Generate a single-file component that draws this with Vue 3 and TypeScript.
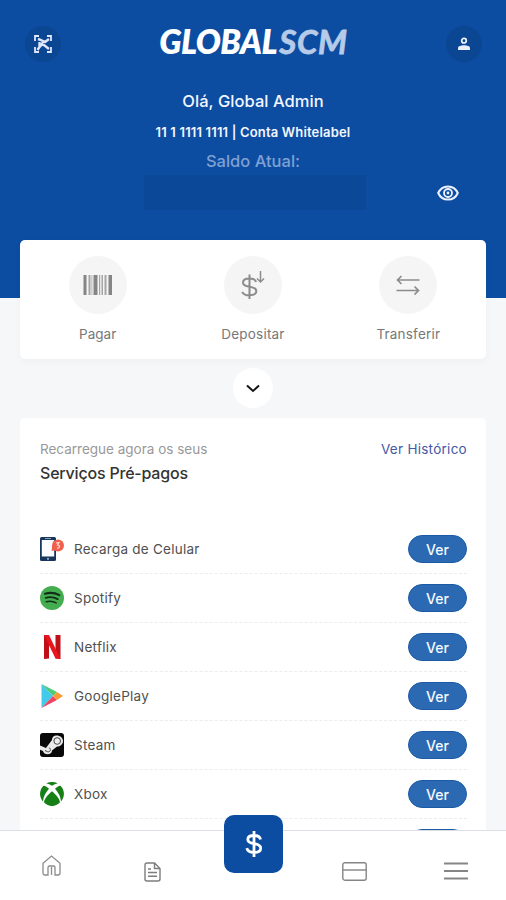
<script setup lang="ts">
interface Service {
  id: string
  name: string
}

const services: Service[] = [
  { id: 'phone', name: 'Recarga de Celular' },
  { id: 'spotify', name: 'Spotify' },
  { id: 'netflix', name: 'Netflix' },
  { id: 'play', name: 'GooglePlay' },
  { id: 'steam', name: 'Steam' },
  { id: 'xbox', name: 'Xbox' },
  { id: 'more', name: '' },
]
</script>

<template>
  <div class="app">
    <main class="content">
      <header class="hero">
        <div class="topbar">
          <button class="round" aria-label="QR">
            <svg width="20" height="20" viewBox="0 0 20 20" fill="none" stroke="#dfe6fa" stroke-width="1.800">
              <path d="M2 7V2h4M14 2h4v5M18 13v5h-4M6 18H2v-5" />
              <path d="M5 5l3 1 4 2 4-3M6.500 8v5l-2 3M8 10l3 1 5 4M10 8l-3 5" stroke-width="2.400" />
            </svg>
          </button>
          <div class="logo"><b>GLOBAL</b><span>SCM</span></div>
          <button class="round" aria-label="Perfil">
            <svg width="14" height="14" viewBox="0 0 14 14">
              <circle cx="7" cy="3.700" r="2.300" fill="none" stroke="#f0f3ff" stroke-width="1.700" />
              <path d="M1 13v-1.800C1 9.200 4 8.300 7 8.300s6 .9 6 2.900V13z" fill="#e8edff" />
            </svg>
          </button>
        </div>
        <div class="hello">Olá, Global Admin</div>
        <div class="account">11 1 1111 1111 | Conta Whitelabel</div>
        <div class="label">Saldo Atual:</div>
        <div class="balance">
          <span class="mask"></span>
          <svg class="eye" width="22" height="16" viewBox="0 0 22 16" fill="none" stroke="#eef2ff">
            <path d="M1.200 8C3 4 6.500 1.400 11 1.400S19 4 20.800 8C19 12 15.500 14.600 11 14.600S3 12 1.200 8z" stroke-width="2" />
            <circle cx="11" cy="8" r="4" stroke-width="1.800" />
            <circle cx="11" cy="8" r="1.400" fill="#eef2ff" stroke="none" />
          </svg>
        </div>
      </header>

      <section class="actions">
        <div class="action">
          <span class="disc">
            <svg width="30" height="20" viewBox="0 0 30 20" fill="#858585">
              <path d="M.5 0h3v20h-3zM10.500 0h4v20h-4zM25.500 0h3.500v20h-3.500z" />
              <path d="M5.500 0h2v20h-2zM8.500 0h.8v20h-.8zM16 0h1.200v20H16zM18.500 0h1.500v20h-1.500zM21.500 0h2v20h-2z" fill="#a5a5a5" />
            </svg>
          </span>
          <span>Pagar</span>
        </div>
        <div class="action wide">
          <span class="disc">
            <svg width="26" height="30" viewBox="0 0 26 30" fill="none" stroke="#8c8c8c" stroke-width="2">
              <path d="M9.500 4.500V29M16 12C15.500 9.200 13 8.500 9.500 8.500c-4 0-6.500 1.300-6.500 4s2.500 3.700 6.500 4.200c4.500.6 6.800 2 6.800 4.400 0 2.800-2.500 4.200-6.800 4.200-4 0-6.300-.9-7.300-3.500" />
              <path d="M20.500 1v11M17 8.500l3.500 3.500 3.500-3.500" stroke-width="1.500" />
            </svg>
          </span>
          <span>Depositar</span>
        </div>
        <div class="action wide">
          <span class="disc">
            <svg width="24" height="20" viewBox="0 0 24 20" fill="none" stroke="#8c8c8c" stroke-width="1.700">
              <path d="M23.500 5H1.500M5.500 1l-4 4 4 4M.5 15.500h22M18.500 11.500l4 4-4 4" />
            </svg>
          </span>
          <span>Transferir</span>
        </div>
      </section>

      <button class="expand" aria-label="Mais">
        <svg width="14" height="9" viewBox="0 0 14 9" fill="none" stroke="#151515" stroke-width="2">
          <path d="M1 1.500l6 5.500 6-5.500" />
        </svg>
      </button>

      <section class="services">
        <div class="head">
          <div>
            <div class="sub">Recarregue agora os seus</div>
            <h2>Serviços Pré-pagos</h2>
          </div>
          <a class="history">Ver Histórico</a>
        </div>
        <ul>
          <li v-for="s in services" :key="s.id">
            <span class="icon">
              <svg v-if="s.id === 'phone'" width="24" height="24" viewBox="0 0 24 24">
                <rect x="0" y="0" width="16" height="24" rx="1.500" fill="#17365b" />
                <rect x="1.800" y="3" width="12.400" height="16.500" fill="#fafcff" />
                <path d="M5 1.500h6" stroke="#8ba2ba" />
                <circle cx="8" cy="21.800" r="1.100" fill="#9fb4c8" />
                <path d="M11.500 14l1-6 4 5z" fill="#f0604d" />
                <circle cx="18" cy="8.500" r="6" fill="#f0604d" />
                <path d="M16 6l3-.5-1.500 2.500c3 0 2.500 3.500-.5 3" fill="none" stroke="#ffd9d3" stroke-width="1.200" />
              </svg>
              <svg v-else-if="s.id === 'spotify'" width="24" height="24" viewBox="0 0 24 24">
                <circle cx="12" cy="12" r="12" fill="#43ad50" />
                <g fill="none" stroke="#112d18" stroke-linecap="round">
                  <path d="M5 7.700c5-1.400 10-.9 14.300 1.400" stroke-width="2.200" />
                  <path d="M5.700 11.800c4.300-1.200 8.400-.7 12 1.300" stroke-width="1.900" />
                  <path d="M6.200 15.700c3.600-.9 7-.5 10 1.200" stroke-width="1.500" />
                </g>
              </svg>
              <svg v-else-if="s.id === 'netflix'" width="24" height="24" viewBox="0 0 24 24">
                <path d="M4 0h5v23.500L4 24zM15.500 0H20.500v24l-5-.5z" fill="#bd1017" />
                <path d="M4 0h5l11.500 24-5-.5z" fill="#e9141d" />
              </svg>
              <svg v-else-if="s.id === 'play'" width="24" height="24" viewBox="0 0 24 24">
                <path d="M1.500 0v24L13 12z" fill="#43c9ec" />
                <path d="M1.500 0L17 8l-4 4z" fill="#4dcb78" />
                <path d="M1.500 24L17 16l-4-4z" fill="#ee4662" />
                <path d="M17 8l6 4-6 4-4-4z" fill="#f89a36" />
              </svg>
              <svg v-else-if="s.id === 'steam'" width="24" height="24" viewBox="0 0 24 24">
                <rect width="24" height="24" rx="3" fill="#080808" />
                <path d="M0 12.500l6 2.500 6-8c0-7 11-5.500 11 1 0 3.500-3 5.500-6 5.500l-5 4c0 5-8 5-9 .5l-3-1.200z" fill="#e9e9e9" />
                <circle cx="17.200" cy="8" r="3.300" fill="#eee" stroke="#444" />
                <path d="M5 17.500l2.500 1.200c3 .8 4-3 1.400-4" fill="none" stroke="#444" />
              </svg>
              <svg v-else-if="s.id === 'xbox'" width="24" height="24" viewBox="0 0 24 24">
                <path d="M6 1.500C10-.6 14-.6 18 1.500 16 1.300 14 2.500 12 3.800 10 2.500 8 1.300 6 1.500zM3.500 3.700C5 3.500 7.500 5.200 9 6.800 5.500 10.600 3.300 15 3 19.500-1 15-1 8 3.500 3.700zM20.500 3.700C19 3.500 16.500 5.200 15 6.800c3.500 3.800 5.700 8.200 6 12.700 4-4.500 4-11.500-.5-15.800zM12 9.300c4 3.200 7.800 8 8 11-4.300 5-11.700 5-16 0 .2-3 4-7.800 8-11z" fill="#168017" />
              </svg>
            </span>
            <span class="name">{{ s.name }}</span>
            <button class="ver"><template v-if="s.name">Ver</template></button>
          </li>
        </ul>
      </section>
    </main>

    <nav class="tabs">
      <span class="tab home">
        <svg width="19" height="21" viewBox="0 0 19 21" fill="none" stroke="#8c8c8c" stroke-width="1.300">
          <path d="M1 8.200L9.500 1 18 8.200V18q0 2-2 2h-3v-7.500q0-1.500-1.500-1.500h-4Q6 11 6 12.500V20H3q-2 0-2-2zM9.500 12v8" />
        </svg>
      </span>
      <span class="tab">
        <svg width="17" height="20" viewBox="0 0 17 20" fill="none" stroke="#7d7d7d" stroke-width="1.400">
          <path d="M10.500 1H3Q1 1 1 3v14q0 2 2 2h11q2 0 2-2V6.500zM10.500 1v5.500H16M4 7h3M4 10.500h9M4 14.200h9" />
        </svg>
      </span>
      <span class="tab">
        <button class="pay" aria-label="Pix">
          <svg width="18" height="26" viewBox="0 0 18 26" fill="none" stroke="#fff" stroke-width="2.800">
            <path d="M9 0v26M15.500 8.500C15 5.500 12.500 4.500 9 4.500c-4 0-6.200 1.300-6.200 4 0 2.500 2 3.400 6.200 4.200 4.700.8 6.700 2 6.700 4.600 0 2.900-2.500 4.200-6.700 4.200S2.600 20.300 1.800 17.200" />
          </svg>
        </button>
      </span>
      <span class="tab">
        <svg width="25" height="19" viewBox="0 0 25 19" fill="none" stroke="#858585" stroke-width="1.400">
          <rect x=".8" y=".8" width="23.400" height="17.400" rx="2" />
          <path d="M1 8h23" />
        </svg>
      </span>
      <span class="tab">
        <svg width="24" height="18" viewBox="0 0 24 18" stroke="#858585" stroke-width="2">
          <path d="M0 1.500h24M0 9h24M0 16.500h24" />
        </svg>
      </span>
    </nav>
  </div>
</template>

<style>
body {
  margin: 0;
}
</style>

<style scoped>
.app {
  width: 506px;
  height: 900px;
  display: flex;
  flex-direction: column;
  overflow: hidden;
  background: #f5f7f9;
  font-family: Inter, "Liberation Sans", sans-serif;
}
button {
  border: 0;
  padding: 0;
  font: inherit;
  display: flex;
  align-items: center;
  justify-content: center;
}
svg {
  display: block;
}
.content {
  height: 830px;
  overflow: hidden;
  display: flex;
  flex-direction: column;
  flex: none;
}
.hero {
  height: 298px;
  flex: none;
  box-sizing: border-box;
  padding-top: 25px;
  background: #0c4da2;
  color: #f3f6ff;
  text-align: center;
  white-space: nowrap;
}
.topbar {
  display: flex;
  justify-content: space-between;
  align-items: center;
  padding: 0 24px 0 25px;
  height: 38px;
}
.round {
  width: 36px;
  height: 36px;
  border-radius: 50%;
  background: #0b4692;
}
.logo {
  font: italic 33px/38px Lato, sans-serif;
  height: 44px;
  color: #fff;
}
.logo b {
  font-weight: 800;
  letter-spacing: -0.5px;
}
.logo span {
  color: #b6cbe8;
  font-weight: 700;
  -webkit-text-stroke: 0.8px #b6cbe8;
  letter-spacing: 0.7px;
  margin-left: 2px;
}
.hello {
  margin-top: 27px;
  font-size: 16.500px;
  line-height: 22px;
  font-weight: 500;
  letter-spacing: 0.05px;
}
.account {
  margin-top: 10px;
  font-size: 13px;
  line-height: 20px;
  font-weight: 600;
  letter-spacing: 0.17px;
}
.label {
  margin-top: 8px;
  font-size: 16.500px;
  line-height: 22px;
  font-weight: 500;
  color: #7fa0d2;
}
.balance {
  margin: 3px 47px 0 144px;
  display: flex;
  align-items: center;
  justify-content: space-between;
}
.mask {
  width: 222px;
  height: 35px;
  background: #0b4998;
}
.actions {
  flex: none;
  box-sizing: border-box;
  height: 119px;
  margin: -58px 20px 0;
  padding-top: 16px;
  display: grid;
  grid-template-columns: repeat(3, 1fr);
  background: #fff;
  border-radius: 5px;
  box-shadow: 0 3px 8px rgba(0, 0, 0, 0.03);
}
.action {
  display: flex;
  flex-direction: column;
  align-items: center;
  font-size: 13.500px;
  line-height: 20px;
  color: #777;
  gap: 10px;
}
.wide {
  letter-spacing: 0.2px;
}
.disc {
  width: 58px;
  height: 58px;
  border-radius: 50%;
  background: #f5f5f5;
  display: flex;
  align-items: center;
  justify-content: center;
}
.expand {
  flex: none;
  align-self: center;
  width: 40px;
  height: 40px;
  margin-top: 9px;
  border-radius: 50%;
  background: #fff;
}
.services {
  flex: none;
  margin: 10px 20px 0;
  height: 460px;
  padding: 20px 19px 0 20px;
  background: #fff;
  border-radius: 5px;
}
.head {
  display: flex;
  justify-content: space-between;
  height: 87px;
  white-space: nowrap;
}
.sub {
  font-size: 13.500px;
  line-height: 22px;
  color: #999;
}
h2 {
  margin: 1px 0 0;
  font-size: 16px;
  line-height: 24px;
  font-weight: 500;
  letter-spacing: -0.2px;
  color: #333;
}
.history {
  font-size: 13.500px;
  line-height: 22px;
  letter-spacing: 0.27px;
  color: #4558a6;
}
ul {
  margin: 0;
  padding: 0;
  list-style: none;
}
li {
  display: flex;
  align-items: center;
  height: 48px;
  border-bottom: 1px dashed #ececec;
}
.icon {
  width: 24px;
  margin-right: 10px;
}
.name {
  flex: 1;
  font-size: 13.500px;
  letter-spacing: 0.25px;
  color: #505050;
  white-space: nowrap;
}
.ver {
  width: 59px;
  height: 28px;
  border-radius: 14px;
  background: #2b6ab3;
  border: 1px solid #1d5aa6;
  color: #f6faff;
  font-size: 14px;
  font-weight: 500;
}
.tabs {
  height: 69px;
  flex: none;
  border-top: 1px solid #dcdfe3;
  background: #fff;
  display: grid;
  grid-template-columns: repeat(5, 1fr);
  padding-left: 1px;
}
.tab {
  display: flex;
  justify-content: center;
  align-items: flex-start;
  padding-top: 31px;
}
.home {
  padding-top: 24px;
}
.pay {
  flex: none;
  width: 59px;
  height: 58px;
  margin-top: -47px;
  border-radius: 10px;
  background: #0c4da2;
}
</style>
